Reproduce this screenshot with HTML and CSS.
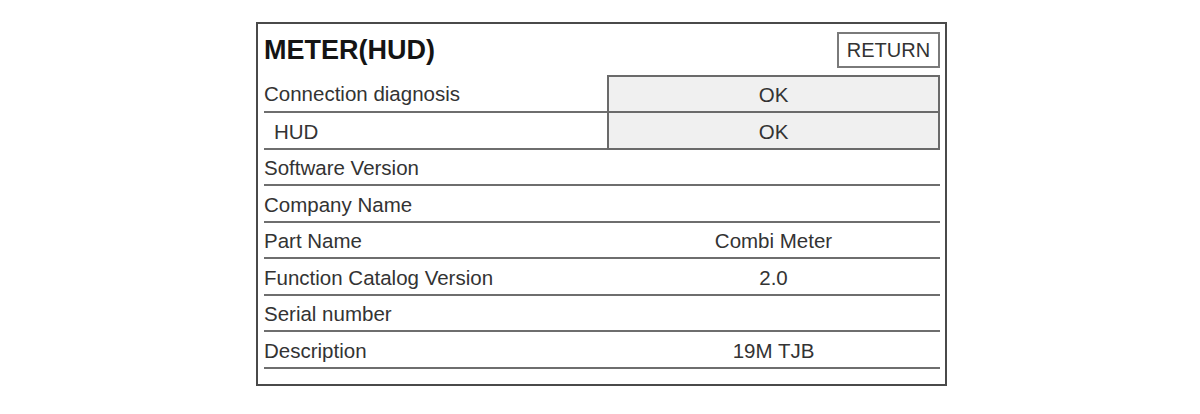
FILE: index.html
```html
<!DOCTYPE html>
<html>
<head>
<meta charset="utf-8">
<link rel="stylesheet" href="styles.css">
</head>
<body>
<div class="panel">
  <div class="head">
    <h1 class="title">METER(HUD)</h1>
    <div class="btn">RETURN</div>
  </div>
  <div class="rows">
    <div class="row diag first"><div class="lbl">Connection diagnosis</div><div class="val ok">OK</div></div>
    <div class="row diag"><div class="lbl sub">HUD</div><div class="val ok">OK</div></div>
    <div class="row"><div class="lbl">Software Version</div><div class="val"></div></div>
    <div class="row"><div class="lbl">Company Name</div><div class="val"></div></div>
    <div class="row"><div class="lbl">Part Name</div><div class="val">Combi Meter</div></div>
    <div class="row"><div class="lbl">Function Catalog Version</div><div class="val">2.0</div></div>
    <div class="row"><div class="lbl">Serial number</div><div class="val"></div></div>
    <div class="row"><div class="lbl">Description</div><div class="val">19M TJB</div></div>
  </div>
</div>
</body>
</html>
```
FILE: styles.css
```css
html, body {
  margin: 0;
  padding: 0;
  background: #ffffff;
}
body {
  font-family: "Liberation Sans", Arial, sans-serif;
  color: #333;
}
.panel {
  box-sizing: border-box;
  margin: 22px 0 0 256px;
  width: 691px;
  height: 364px;
  border: 2px solid #4a4a4a;
  padding: 0 5px 0 6px;
}
.head {
  height: 51px;
  display: flex;
  align-items: center;
  justify-content: space-between;
}
.title {
  margin: 2px 0 0 0;
  font-size: 27px;
  font-weight: bold;
  color: #141414;
}
.btn {
  box-sizing: border-box;
  width: 103px;
  height: 36px;
  border: 2px solid #7a7a7a;
  display: flex;
  align-items: center;
  justify-content: center;
  font-size: 20px;
  color: #333;
  margin-top: 1px;
  padding-top: 1px;
}
.rows {
  display: grid;
  grid-template-rows: 38px 37px 36px 37px 36px 37px 36px 37px;
}
.row {
  display: grid;
  grid-template-columns: 343px 1fr;
  box-sizing: border-box;
  border-bottom: 2px solid #6e6e6e;
  font-size: 20.5px;
}
.row.diag {
  border-bottom: none;
}
.lbl {
  display: flex;
  align-items: center;
  white-space: nowrap;
  padding-top: 2px;
}
.diag .lbl {
  box-sizing: border-box;
  border-bottom: 2px solid #6e6e6e;
}
.lbl.sub {
  padding-left: 10px;
}
.val {
  display: flex;
  align-items: center;
  justify-content: center;
  white-space: nowrap;
  padding-top: 2px;
}
.val.ok {
  box-sizing: border-box;
  background: #f0f0f0;
  border: 2px solid #6a6a6a;
  border-top: none;
}
.first .val.ok {
  border-top: 2px solid #6a6a6a;
}
```
